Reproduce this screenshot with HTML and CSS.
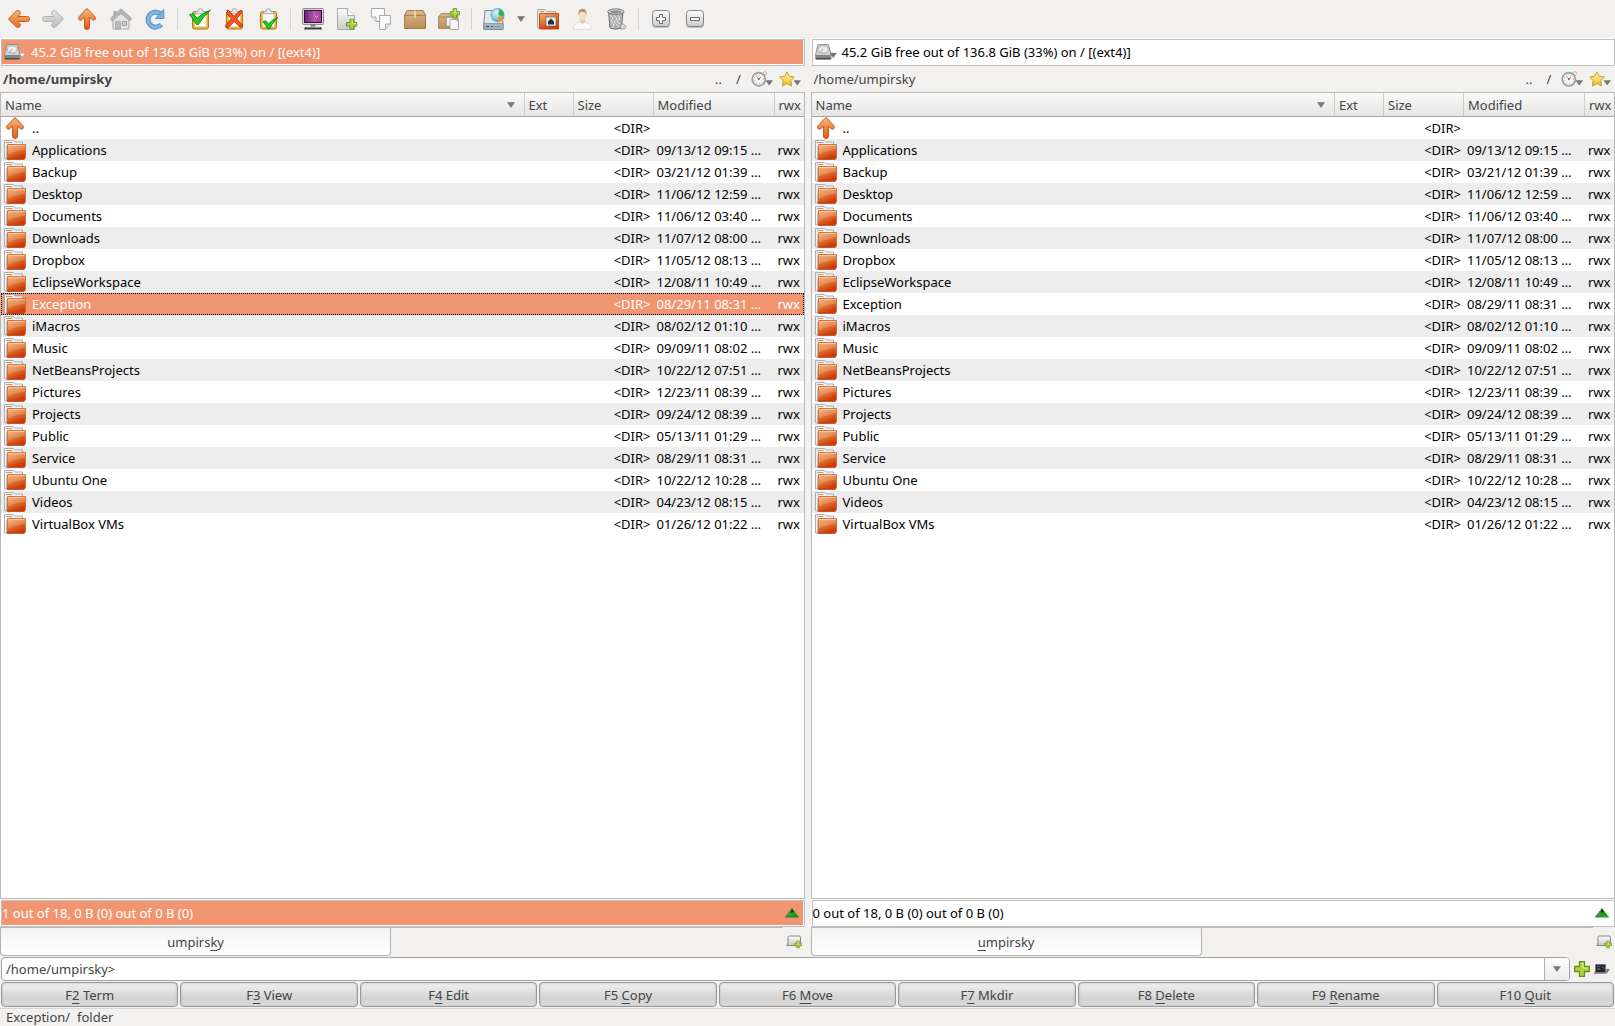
FILE: index.html
```
<!DOCTYPE html>
<html lang="en">
<head>
    <meta charset="UTF-8">
    <meta name="viewport" content="width=device-width, initial-scale=1.0">
    <title>Krusader</title>
    <link rel="stylesheet" href="styles.css">
</head>
<body>

    <!-- Icon definitions -->
    <svg class="icon-defs" aria-hidden="true">
        <defs>
            <linearGradient id="orange" x1="0" y1="0" x2="0" y2="1">
                <stop offset="0" stop-color="#f3ba78"/>
                <stop offset="1" stop-color="#e2560f"/>
            </linearGradient>
            <linearGradient id="orangeLeft" x1="0" y1="0" x2="0" y2="1">
                <stop offset="0" stop-color="#f7b878"/>
                <stop offset="1" stop-color="#e96a20"/>
            </linearGradient>
            <linearGradient id="folderFront" x1="0" y1="0" x2=".5" y2="1">
                <stop offset="0" stop-color="#f2b275"/>
                <stop offset="0.5" stop-color="#e07a38"/>
                <stop offset="1" stop-color="#cf3805"/>
            </linearGradient>
            <linearGradient id="gray" x1="0" y1="0" x2="0" y2="1">
                <stop offset="0" stop-color="#e2e2e2"/>
                <stop offset="1" stop-color="#bdbdbd"/>
            </linearGradient>
            <linearGradient id="box" x1="0" y1="0" x2="0" y2="1">
                <stop offset="0" stop-color="#dcb98a"/>
                <stop offset="1" stop-color="#b98c56"/>
            </linearGradient>
            <linearGradient id="metal" x1="0" y1="0" x2="0" y2="1">
                <stop offset="0" stop-color="#fdfdfd"/>
                <stop offset="1" stop-color="#c9c9c9"/>
            </linearGradient>
            <linearGradient id="screen" x1="0" y1="0" x2="1" y2="0">
                <stop offset="0" stop-color="#6d2470"/>
                <stop offset="0.6" stop-color="#b658b4"/>
                <stop offset="1" stop-color="#94429a"/>
            </linearGradient>
            <linearGradient id="star" x1="0" y1="0" x2="0" y2="1">
                <stop offset="0" stop-color="#fff6c0"/>
                <stop offset="1" stop-color="#f5bd12"/>
            </linearGradient>
            <radialGradient id="globe" cx="0.4" cy="0.35" r="0.7">
                <stop offset="0" stop-color="#e4f5fc"/>
                <stop offset="1" stop-color="#4aa3cf"/>
            </radialGradient>
        </defs>

        <symbol id="i-back" viewBox="0 0 22 22">
            <path d="M8.2 3.2 Q10.6 1.4 12.2 3.8 Q13 5.4 11.6 6.8 L9.9 8.5 H19.5 Q21.5 8.5 21.5 11 T19.5 13.5 H9.9 L11.6 15.2 Q13 16.6 12.2 18.2 Q10.6 20.6 8.2 18.8 L1.3 12 Q.2 11 1.3 10Z" fill="url(#orangeLeft)" stroke="#cf5b1e"/>
        </symbol>
        <symbol id="i-forward" viewBox="0 0 22 22">
            <path d="M13.8 3.2 Q11.4 1.4 9.8 3.8 Q9 5.4 10.4 6.8 L12.1 8.5 H2.5 Q.5 8.5 .5 11 T2.5 13.5 H12.1 L10.4 15.2 Q9 16.6 9.8 18.2 Q11.4 20.6 13.8 18.8 L20.7 12 Q21.8 11 20.7 10Z" fill="url(#gray)" stroke="#b3b3b3"/>
        </symbol>
        <symbol id="i-up" viewBox="0 0 22 22">
            <path d="M3 8.8 L10 1.3 Q11 .2 12 1.3 L19 8.8 Q20.2 10.6 18.8 11.8 Q17.2 12.8 15.8 11.4 L13.5 9 V19.5 Q13.5 21.5 11 21.5 T8.5 19.5 V9 L6.2 11.4 Q4.8 12.8 3.2 11.8 Q1.8 10.6 3 8.8Z" fill="url(#orange)" stroke="#c95a24"/>
        </symbol>
        <symbol id="i-home" viewBox="0 0 22 22">
            <path d="M3 9.5 L11 2.5 L19 9.5 V21 H3Z" fill="#e3e3e3" stroke="#aaa"/>
            <path d="M3.5 3 H6.5 V8 H3.5Z" fill="#aaa"/>
            <path d="M11 .8 L21.6 10.4 L20 13 L11 5.5 L2 13 L.4 10.4Z" fill="#b4b4b4" stroke="#999" stroke-width=".7"/>
            <path d="M5.5 13.5 H10.5 V21 H5.5Z" fill="#b9b9b9" stroke="#a2a2a2" stroke-width=".7"/>
            <path d="M12.5 13.5 H16.5 V17.5 H12.5Z" fill="#ccc" stroke="#a2a2a2"/>
        </symbol>
        <symbol id="i-refresh" viewBox="0 0 22 22">
            <path d="M17.3 16.5 A7.5 7.5 0 1 1 16 5.6" fill="none" stroke="#4f8fc6" stroke-width="5"/>
            <path d="M17.3 16.5 A7.5 7.5 0 1 1 16 5.6" fill="none" stroke="#83b7e2" stroke-width="3"/>
            <path d="M19.8 1.5 V10.5 H11.5 L14 8 L16.6 4.5Z" fill="#80b4e0" stroke="#4f8fc6"/>
        </symbol>

        <symbol id="i-clipboard" viewBox="0 0 22 22">
            <rect x="3.5" y="3.5" width="16" height="17.5" rx="2" fill="#f2b234" stroke="#b9790e"/>
            <path d="M5.8 5.5 H17.2 V18.8 H5.8Z" fill="#fff" stroke="#d3c6a8" stroke-width=".6"/>
            <path d="M6.5 5.8 V3.6 H9 Q9 .6 11.5 .6 T14 3.6 H16.5 V5.8Z" fill="#e8e8e8" stroke="#9c9c9c" stroke-width=".8"/>
        </symbol>
        <symbol id="i-select" viewBox="0 0 22 22">
            <use href="#i-clipboard"/>
            <path d="M.7 6.5 L4.5 5.5 L8 10.5 Q13 5 21.5 2.2 Q14 8.5 9.3 16.5 H7.5Z" fill="#1fd11f" stroke="#0a8412" stroke-width=".9"/>
        </symbol>
        <symbol id="i-unselect" viewBox="0 0 22 22">
            <use href="#i-clipboard"/>
            <path d="M4.6 3.6 Q3 1.8 5 2 L11 8.3 L17.5 2.5 Q20 2 19 4 L13.7 11 L19.5 17.2 Q19.8 19.5 17 19 L11.3 13.5 L5.3 19.5 Q2 20.4 2.6 17.3 L8.3 10.8 L3.4 5.3Z" fill="#f4541e" stroke="#bb2608" stroke-width=".9"/>
        </symbol>
        <symbol id="i-invert" viewBox="0 0 22 22">
            <use href="#i-clipboard"/>
            <path d="M6 13.5 L8.8 12.8 L11.5 16 Q15 11.5 20.8 9.5 Q15.5 14.5 12.5 20.8 H11Z" fill="#1fd11f" stroke="#0a8412" stroke-width=".9"/>
        </symbol>

        <symbol id="i-terminal" viewBox="0 0 22 22">
            <rect x=".5" y=".5" width="21" height="16" rx="1" fill="#d5d5d2" stroke="#8d8d8a"/>
            <rect x="2.5" y="2.5" width="17" height="12" fill="url(#screen)" stroke="#35103a"/>
            <path d="M12.5 7.5 L14.5 9.5 L16.5 7.5" fill="none" stroke="#ecc5ec" stroke-width=".8"/>
            <path d="M8.5 16.5 H13.5 V19 H8.5Z" fill="#777"/>
            <path d="M3 19 H19 L20 21.5 H2Z" fill="#3c3c3c"/>
            <path d="M4 19 H18" stroke="#ddd"/>
        </symbol>
        <symbol id="i-plus" viewBox="0 0 16 16">
            <path d="M5.5 .7 H10.5 V5.5 H15.3 V10.5 H10.5 V15.3 H5.5 V10.5 H.7 V5.5 H5.5Z" fill="#b5cf3f" stroke="#5f9220" stroke-width="1.3"/>
            <path d="M7 2.3 H9 V7 H13.7" fill="none" stroke="#e1ee9c" stroke-width="1"/>
        </symbol>
        <symbol id="i-newfile" viewBox="0 0 22 22">
            <path d="M1.5 .5 H11.5 L18.5 7.5 V21.5 H1.5Z" fill="url(#metal)" stroke="#ababab"/>
            <path d="M11.5 .5 V7.5 H18.5" fill="#fff" stroke="#ababab"/>
            <use href="#i-plus" x="10" y="10.5" width="11.5" height="11.5"/>
        </symbol>
        <symbol id="i-copy" viewBox="0 0 22 22">
            <path d="M1.5 .5 H14.5 V13.5 H6 L1.5 9Z" fill="#fcfcfc" stroke="#a9a9a9"/>
            <path d="M1.5 9 H6 V13.5" fill="#e5e5e5" stroke="#a9a9a9"/>
            <path d="M9.5 7.5 H20.5 V16 L15.5 21.5 H9.5Z" fill="#fcfcfc" stroke="#a9a9a9"/>
            <path d="M15.5 21.5 V16 H20.5" fill="#e5e5e5" stroke="#a9a9a9"/>
        </symbol>
        <symbol id="i-pack" viewBox="0 0 22 22">
            <path d="M3 2.5 H19 L21.5 7 V20.5 H.5 V7Z" fill="url(#box)" stroke="#a07c4c"/>
            <path d="M.5 7.5 H21.5" stroke="#a98251"/>
            <path d="M10 2.5 H12 V10 H10Z" fill="#e8cfa6"/>
        </symbol>
        <symbol id="i-paste" viewBox="0 0 22 22">
            <path d="M3 5.5 H18.5 L20 9 V20.5 H.5 V9Z" fill="url(#box)" stroke="#b08b5b"/>
            <path d="M.5 9 H19" stroke="#a98251"/>
            <path d="M8.5 9.5 H15 V18 H8.5Z" fill="#f3f3f3" stroke="#999" stroke-width=".8"/>
            <path d="M12 11.5 H18 L20.5 14 V21.5 H12Z" fill="#f7f7f7" stroke="#999" stroke-width=".8"/>
            <use href="#i-plus" x="11.5" y="0" width="10.5" height="10.5"/>
        </symbol>

        <symbol id="i-network" viewBox="0 0 22 22">
            <path d="M2 2.5 H18 L20 15 V21.5 H.8 V15Z" fill="#e2e7ec" stroke="#7b8894"/>
            <path d="M1 15.5 H20 V21.3 H1Z" fill="#a5b4c2" stroke="#7b8894" stroke-width=".7"/>
            <path d="M3 18.5 H6 M8 18.5 H9.5" stroke="#35404a"/>
            <path d="M10 18.5 H18" stroke="#6fae7a"/>
            <circle cx="14.5" cy="7" r="6.7" fill="url(#globe)" stroke="#4e9fc4" stroke-width=".6"/>
            <path d="M16 1 Q20 2 21 6.5 Q18.5 9.5 16 7 Q14 5 16.5 4Z" fill="#32b340"/>
            <path d="M15 8.5 L21.8 10.5 L15.5 15Z" fill="#f7941d"/>
        </symbol>
        <symbol id="i-homefolder" viewBox="0 0 22 22">
            <path d="M.5 1.5 H8 L10 3.5 H18.5 V20 H.5Z" fill="#ececec" stroke="#a7a7a7"/>
            <path d="M2.5 3.5 H7" stroke="#ee8a50"/>
            <path d="M2.5 5.5 H21.5 V21 H2.5Z" fill="url(#folderFront)" stroke="#c44b18"/>
            <rect x="9" y="9" width="10" height="9" fill="#eee" stroke="#777" stroke-width=".8"/>
            <path d="M11 13.5 L14 10.5 L17 13.5 V16.5 H11Z" fill="#29303a"/>
        </symbol>
        <symbol id="i-user" viewBox="0 0 22 22">
            <path d="M2.5 21.3 Q2 15 8.5 14 H13.5 Q20.5 15 20 21.3Z" fill="#fafafa" stroke="#dcdcdc"/>
            <path d="M9 10 H14 V14 Q11.5 17 9 14Z" fill="#e9c9a2"/>
            <ellipse cx="11.5" cy="6.8" rx="3.7" ry="5.2" fill="#f6dfc1"/>
            <path d="M7.5 7.5 Q6.8 .7 11.5 .7 T15.5 7.5 L14.3 4.3 Q11.5 3.2 8.8 4.3Z" fill="#b3905a"/>
        </symbol>
        <symbol id="i-trash" viewBox="0 0 22 22">
            <path d="M3.5 4 H18 L16.5 20 Q10.5 22.5 5 20Z" fill="#b0b0b0" stroke="#777"/>
            <path d="M5.5 7 L8 10 L6 13 L9 17 L7 20 M9 7 L12 11 L9 14 L14 19 M13 7 L15 10 L12 14 L15 16" fill="none" stroke="#e9e9e9"/>
            <ellipse cx="10.8" cy="3.7" rx="8.2" ry="2.8" fill="#d5d5d5" stroke="#777"/>
            <ellipse cx="10.8" cy="3.9" rx="5.8" ry="1.5" fill="#8e8e8e"/>
            <path d="M15.5 17 L18 15.8 L21 18.5 L19.5 21 H15.5Z" fill="#d8d8d8" stroke="#8a8a8a" stroke-width=".8"/>
        </symbol>
        <symbol id="i-expand" viewBox="0 0 22 22">
            <rect x="2.5" y="2.5" width="17" height="17.5" rx="3" fill="#c4c4c4"/>
            <rect x="2.5" y="2.5" width="17" height="16" rx="3" fill="url(#metal)" stroke="#858585"/>
            <path d="M9.5 6.5 H12.5 V9.5 H15.5 V12.5 H12.5 V15.5 H9.5 V12.5 H6.5 V9.5 H9.5Z" fill="#fff" stroke="#6d6d6d"/>
        </symbol>
        <symbol id="i-collapse" viewBox="0 0 22 22">
            <rect x="2.5" y="2.5" width="17" height="17.5" rx="3" fill="#c4c4c4"/>
            <rect x="2.5" y="2.5" width="17" height="16" rx="3" fill="url(#metal)" stroke="#858585"/>
            <path d="M6.5 9.5 H15.5 V12.5 H6.5Z" fill="#fff" stroke="#6d6d6d"/>
        </symbol>

        <symbol id="i-arrow" viewBox="0 0 8 6">
            <path d="M.5 .5 H7.5 L4 5.5Z" fill="currentColor" stroke="#777" stroke-width=".6"/>
        </symbol>
        <symbol id="i-disk" viewBox="0 0 22 16">
            <path d="M3 .6 H13.5 L16 10.5 V15 H.6 V10.5Z" fill="#d2d2d2" stroke="#888" stroke-width=".9"/>
            <ellipse cx="8.2" cy="5.4" rx="5" ry="3.7" fill="#ececec" stroke="#a5a5a5" stroke-width=".8"/>
            <path d="M8 5 L5 9" stroke="#999"/>
            <path d="M.8 11 H15.8 V15.2 H.8Z" fill="#858585"/>
            <path d="M1 14.8 H15.6" stroke="#333"/>
            <use href="#i-arrow" x="14.5" y="8.5" width="7.5" height="5.6"/>
        </symbol>
        <symbol id="i-clock" viewBox="0 0 22 16">
            <circle cx="14" cy="2.4" r="1.8" fill="#e6e6e6" stroke="#b5b5b5" stroke-width=".7"/>
            <circle cx="7.8" cy="8.2" r="6.6" fill="#f7f7f7" stroke="#a0a0a0" stroke-width="1.8"/>
            <circle cx="7.8" cy="8.2" r="4.6" fill="none" stroke="#888" stroke-width=".8" stroke-dasharray="1 2"/>
            <path d="M5.5 5.5 L8 8.2 L10 6" fill="none" stroke="#777" stroke-width=".8"/>
            <circle cx="7.8" cy="8" r="1" fill="#d3431d"/>
            <use href="#i-arrow" x="14.5" y="9" width="7.5" height="5.6"/>
        </symbol>
        <symbol id="i-star" viewBox="0 0 22 16">
            <path d="M8 .8 L10.2 5.3 L15.4 6 L11.7 9.6 L12.6 15 L8 12.4 L3.4 15 L4.3 9.6 L.6 6 L5.8 5.3Z" fill="url(#star)" stroke="#d09a2a" stroke-linejoin="round"/>
            <use href="#i-arrow" x="14.5" y="9" width="7.5" height="5.6"/>
        </symbol>
        <symbol id="i-folder" viewBox="0 0 22 20">
            <path d="M.5 19 V.5 H9.5 L11 2 H18.5 V6 H3 V19Z" fill="#f4f4f4" stroke="#a9aeb4"/>
            <path d="M2 2.5 H8.5 M5 4.5 H10" stroke="#eb8a58"/>
            <path d="M3.5 4.5 H21.5 V17.5 Q21.5 19 19.5 19 H3 Z" fill="url(#folderFront)" stroke="#d2622c" stroke-width=".8"/>
            <path d="M4 5 H21 V10 Q12 10.5 4 14.5Z" fill="#fff" opacity=".16"/>
            <path d="M4 5.5 H21" stroke="#f7cfa8" stroke-width=".8"/>
            <path d="M3 19.2 H20.5" stroke="#b22b07"/>
        </symbol>
        <symbol id="i-pyramid" viewBox="0 0 14 10">
            <path d="M7 .3 L13.8 8.7 H.2Z" fill="#12a512"/>
            <path d="M7 .3 L5.5 8.7 H.2Z" fill="#4d8f4f"/>
            <path d="M7 .3 L9 4 L5.5 5Z" fill="#0b3d0b"/>
            <path d="M.2 9 H13.8" stroke="#0a6d0a" stroke-width=".8"/>
        </symbol>
        <symbol id="i-newtab" viewBox="0 0 16 14">
            <path d="M.5 10.5 Q2 10 2 7.5 V2.5 Q2 1 3.5 1 H13 Q14.5 1 14.5 2.5 V10.5Z" fill="url(#metal)" stroke="#858585"/>
            <use href="#i-plus" x="8" y="5.5" width="8" height="8"/>
        </symbol>
        <symbol id="i-console" viewBox="0 0 16 12">
            <path d="M1.5 1.5 H11.5 V8 L12 10.5 H.5 L1.5 8Z" fill="#24262b" stroke="#77787c"/>
            <path d="M3 3.5 H5.5 M3 6 H6.5 M8 4 L10 5.5" stroke="#777a83"/>
            <path d="M.5 10 H12" stroke="#9d9ea2" stroke-width="1.4"/>
            <use href="#i-arrow" x="10" y="5.5" width="6" height="5"/>
        </symbol>
    </svg>

    <!-- Main toolbar -->
    <nav class="toolbar" aria-label="Main toolbar">
        <button class="tool" aria-label="Back"><svg><use href="#i-back"/></svg></button>
        <button class="tool" aria-label="Forward"><svg><use href="#i-forward"/></svg></button>
        <button class="tool" aria-label="Up"><svg><use href="#i-up"/></svg></button>
        <button class="tool" aria-label="Home"><svg><use href="#i-home"/></svg></button>
        <button class="tool" aria-label="Reload"><svg><use href="#i-refresh"/></svg></button>
        <span class="separator"></span>
        <button class="tool" aria-label="Select group"><svg><use href="#i-select"/></svg></button>
        <button class="tool" aria-label="Unselect group"><svg><use href="#i-unselect"/></svg></button>
        <button class="tool" aria-label="Invert selection"><svg><use href="#i-invert"/></svg></button>
        <span class="separator"></span>
        <button class="tool" aria-label="Terminal"><svg><use href="#i-terminal"/></svg></button>
        <button class="tool" aria-label="New file"><svg><use href="#i-newfile"/></svg></button>
        <button class="tool" aria-label="Compare"><svg><use href="#i-copy"/></svg></button>
        <button class="tool" aria-label="Pack"><svg><use href="#i-pack"/></svg></button>
        <button class="tool" aria-label="Unpack"><svg><use href="#i-paste"/></svg></button>
        <span class="separator"></span>
        <button class="tool" aria-label="Network connection"><svg><use href="#i-network"/></svg></button>
        <button class="tool tool-menu" aria-label="Connection menu"><svg><use href="#i-arrow"/></svg></button>
        <button class="tool" aria-label="Home folder"><svg><use href="#i-homefolder"/></svg></button>
        <button class="tool" aria-label="Root mode"><svg><use href="#i-user"/></svg></button>
        <button class="tool" aria-label="Trash"><svg><use href="#i-trash"/></svg></button>
        <span class="separator"></span>
        <button class="tool" aria-label="Mark"><svg><use href="#i-expand"/></svg></button>
        <button class="tool" aria-label="Unmark"><svg><use href="#i-collapse"/></svg></button>
    </nav>

    <!-- File panels -->
    <main class="panels">
        <section class="panel active">
            <div class="info-bar">
                <button class="icon-button" aria-label="Media"><svg class="small-icon"><use href="#i-disk"/></svg></button>
                <span>45.2 GiB free out of 136.8 GiB (33%) on / [(ext4)]</span>
            </div>
            <div class="path-bar">
                <span class="path">/home/umpirsky</span>
                <button class="path-button">..</button>
                <button class="path-button">/</button>
                <button class="icon-button" aria-label="History"><svg class="small-icon"><use href="#i-clock"/></svg></button>
                <button class="icon-button" aria-label="Bookmarks"><svg class="small-icon"><use href="#i-star"/></svg></button>
            </div>
            <div class="file-list">
                <table>
                    <thead>
                        <tr>
                            <th class="col-name"><span class="sorted">Name <svg><use href="#i-arrow"/></svg></span></th>
                            <th class="col-ext">Ext</th>
                            <th class="col-size">Size</th>
                            <th class="col-date">Modified</th>
                            <th class="col-perm">rwx</th>
                        </tr>
                    </thead>
                    <tbody data-selected="Exception"></tbody>
                </table>
            </div>
            <div class="info-bar totals">
                <span>1 out of 18, 0 B (0) out of 0 B (0)</span>
                <button class="icon-button" aria-label="Open popup panel"><svg class="pyramid"><use href="#i-pyramid"/></svg></button>
            </div>
            <div class="tab-bar">
                <div class="tabs"><button class="tab">umpirs<u>k</u>y</button></div>
                <button class="icon-button" aria-label="New tab"><svg class="newtab"><use href="#i-newtab"/></svg></button>
            </div>
        </section>

        <section class="panel">
            <div class="info-bar">
                <button class="icon-button" aria-label="Media"><svg class="small-icon"><use href="#i-disk"/></svg></button>
                <span>45.2 GiB free out of 136.8 GiB (33%) on / [(ext4)]</span>
            </div>
            <div class="path-bar">
                <span class="path">/home/umpirsky</span>
                <button class="path-button">..</button>
                <button class="path-button">/</button>
                <button class="icon-button" aria-label="History"><svg class="small-icon"><use href="#i-clock"/></svg></button>
                <button class="icon-button" aria-label="Bookmarks"><svg class="small-icon"><use href="#i-star"/></svg></button>
            </div>
            <div class="file-list">
                <table>
                    <thead>
                        <tr>
                            <th class="col-name"><span class="sorted">Name <svg><use href="#i-arrow"/></svg></span></th>
                            <th class="col-ext">Ext</th>
                            <th class="col-size">Size</th>
                            <th class="col-date">Modified</th>
                            <th class="col-perm">rwx</th>
                        </tr>
                    </thead>
                    <tbody></tbody>
                </table>
            </div>
            <div class="info-bar totals">
                <span>0 out of 18, 0 B (0) out of 0 B (0)</span>
                <button class="icon-button" aria-label="Open popup panel"><svg class="pyramid"><use href="#i-pyramid"/></svg></button>
            </div>
            <div class="tab-bar">
                <div class="tabs"><button class="tab"><u>u</u>mpirsky</button></div>
                <button class="icon-button" aria-label="New tab"><svg class="newtab"><use href="#i-newtab"/></svg></button>
            </div>
        </section>
    </main>

    <!-- Command line -->
    <form class="command-line" onsubmit="return false">
        <div class="command-box">
            <label for="command">/home/umpirsky&gt;</label>
            <input type="text" id="command">
            <button type="button" class="command-history" aria-label="Command history"><svg><use href="#i-arrow"/></svg></button>
        </div>
        <button type="button" class="icon-button" aria-label="Add placeholder"><svg class="add"><use href="#i-plus"/></svg></button>
        <button type="button" class="icon-button" aria-label="Execution mode"><svg class="console"><use href="#i-console"/></svg></button>
    </form>

    <!-- Function keys -->
    <div class="function-keys">
        <button>F<u>2</u> Term</button>
        <button>F<u>3</u> View</button>
        <button>F<u>4</u> Edit</button>
        <button>F5 <u>C</u>opy</button>
        <button>F6 <u>M</u>ove</button>
        <button>F<u>7</u> Mkdir</button>
        <button>F8 <u>D</u>elete</button>
        <button>F9 <u>R</u>ename</button>
        <button>F10 <u>Q</u>uit</button>
    </div>

    <footer class="status-bar">Exception/&nbsp; folder</footer>

    <script src="script.js"></script>
</body>
</html>
```
FILE: styles.css
```
* {
    box-sizing: border-box;
}
body {
    margin: 0;
    height: 100vh;
    display: flex;
    flex-direction: column;
    overflow: hidden;
    background-color: #f2f1f0;
    color: #444;
    font-family: "Noto Sans", "Open Sans", sans-serif;
    font-size: 13px;
    line-height: 18px;
}
button,
input {
    font: inherit;
    color: inherit;
    border: none;
    background: none;
    padding: 0;
    margin: 0;
}
svg {
    display: block;
    flex: none;
}
u {
    text-underline-offset: 3px;
    text-decoration-skip-ink: none;
}
.icon-defs {
    position: absolute;
    width: 0;
    height: 0;
}

/* Toolbar */
.toolbar {
    display: flex;
    align-items: center;
    height: 38px;
    padding: 0 2px;
}
.tool {
    display: flex;
    justify-content: center;
    align-items: center;
    width: 34px;
    height: 34px;
}
.tool svg {
    width: 22px;
    height: 22px;
}
.tool-menu {
    width: 20px;
    color: #777;
}
.tool-menu svg {
    width: 8px;
    height: 6px;
}
.separator {
    width: 1px;
    height: 22px;
    margin: 0 5px;
    background-color: #d6d4d2;
}

/* Panels */
.panels {
    flex: 1;
    display: flex;
    gap: 6px;
    min-height: 0;
}
.panel {
    flex: 1;
    display: flex;
    flex-direction: column;
    min-width: 0;
}
.info-bar {
    display: flex;
    align-items: center;
    gap: 5px;
    height: 28px;
    padding: 0 0 0 3px;
    border: 1px solid;
    border-color: #fff #c0bfbd #c0bfbd #fff;
    box-shadow: inset 1px 1px #c0bfbd, inset -1px -1px #fff;
    background-color: #fff;
    color: #000;
}
.active .info-bar {
    background-color: #f19570;
    color: #fff;
}
.totals {
    justify-content: space-between;
    padding: 0 5px 0 1px;
}
.icon-button {
    display: flex;
    align-items: center;
    color: #777;
}
.active .info-bar .icon-button {
    color: #fff;
}
.small-icon {
    width: 22px;
    height: 16px;
}
.pyramid {
    width: 14px;
    height: 10px;
}

.path-bar {
    display: flex;
    align-items: center;
    height: 26px;
    padding: 0 4px 0 3px;
}
.path {
    flex: 1;
}
.active .path {
    font-weight: bold;
}
.path-button {
    width: 20px;
}
.path-bar .icon-button {
    margin-left: 6px;
}
.path-button + .icon-button {
    margin-left: 2px;
}

/* File list */
.file-list {
    flex: 1;
    min-height: 0;
    overflow: hidden;
    border: 1px solid #bab9b6;
    background-color: #fff;
}
table {
    width: 100%;
    table-layout: fixed;
    border-collapse: separate;
    border-spacing: 0;
}
th {
    height: 24px;
    padding: 0 0 0 4px;
    border-right: 1px solid #cfcdcb;
    border-bottom: 1px solid #a9a7a4;
    background-image: linear-gradient(#fafafa, #e6e5e4);
    font-weight: normal;
    text-align: left;
}
th:last-child {
    border-right: none;
}
.col-ext {
    width: 49px;
}
.col-size {
    width: 80px;
}
.col-date {
    width: 121px;
}
.col-perm {
    width: 29px;
}
.sorted {
    display: flex;
    justify-content: space-between;
    align-items: center;
    padding-right: 9px;
}
.sorted svg {
    width: 8px;
    height: 6px;
    color: #777;
}
td {
    height: 22px;
    padding: 0 3px;
    color: #000;
    line-height: 22px;
    white-space: nowrap;
    overflow: hidden;
}
td.size {
    text-align: right;
}
td.perm {
    padding-right: 0;
}
.file {
    display: flex;
    align-items: center;
    gap: 6px;
    height: 22px;
}
.file svg {
    width: 22px;
    height: 20px;
}
.file .parent {
    height: 22px;
}
tbody tr:nth-child(even) {
    background-color: #ededed;
}
tbody tr.selected {
    background-color: #f19570;
    outline: 1px dotted #000;
    outline-offset: -1px;
}
tr.selected td {
    color: #fff;
}

/* Tabs */
.tab-bar {
    display: flex;
    align-items: center;
    height: 29px;
    padding-right: 3px;
}
.tabs {
    flex: 1;
    height: 29px;
    margin-right: 3px;
    border-top: 1px solid #bab9b6;
}
.tab {
    width: 50%;
    height: 28px;
    border: 1px solid #b3b1ae;
    border-top: none;
    border-radius: 0 0 4px 4px;
    background-image: linear-gradient(#f3f3f3, #fff);
}
.newtab {
    width: 16px;
    height: 14px;
}

/* Command line */
.command-line {
    display: flex;
    align-items: center;
    gap: 4px;
    padding: 1px 5px 1px 1px;
}
.command-box {
    flex: 1;
    display: flex;
    align-items: center;
    height: 24px;
    border: 1px solid #a5a39e;
    border-radius: 4px;
    background-color: #fff;
    overflow: hidden;
}
.command-box label {
    padding-left: 4px;
}
.command-box input {
    flex: 1;
    outline: none;
}
.command-history {
    display: flex;
    justify-content: center;
    align-items: center;
    width: 25px;
    height: 22px;
    border-left: 1px solid #b3b1ae;
    background-image: linear-gradient(#fdfdfd, #ebebea);
}
.command-history svg {
    width: 8px;
    height: 6px;
    color: #777;
}
.add {
    width: 16px;
    height: 16px;
}
.console {
    width: 16px;
    height: 12px;
}

/* Function keys */
.function-keys {
    display: flex;
    gap: 2px;
    padding: 0 1px;
}
.function-keys button {
    flex: 1;
    height: 25px;
    border: 1px solid #999;
    border-radius: 4px;
    background-image: linear-gradient(#f1f1f1, #d2d2d2 70%, #dedede);
    box-shadow: inset 0 0 3px #bbb;
}

.status-bar {
    height: 18px;
    margin-top: 1px;
    padding-left: 6px;
    border-top: 1px solid #d9d7d5;
    line-height: 16px;
}
```
FILE: script.js
```
// Directory entries shown in both panels
const entries = [
    ['Applications', '09/13/12 09:15 …'],
    ['Backup', '03/21/12 01:39 …'],
    ['Desktop', '11/06/12 12:59 …'],
    ['Documents', '11/06/12 03:40 …'],
    ['Downloads', '11/07/12 08:00 …'],
    ['Dropbox', '11/05/12 08:13 …'],
    ['EclipseWorkspace', '12/08/11 10:49 …'],
    ['Exception', '08/29/11 08:31 …'],
    ['iMacros', '08/02/12 01:10 …'],
    ['Music', '09/09/11 08:02 …'],
    ['NetBeansProjects', '10/22/12 07:51 …'],
    ['Pictures', '12/23/11 08:39 …'],
    ['Projects', '09/24/12 08:39 …'],
    ['Public', '05/13/11 01:29 …'],
    ['Service', '08/29/11 08:31 …'],
    ['Ubuntu One', '10/22/12 10:28 …'],
    ['Videos', '04/23/12 08:15 …'],
    ['VirtualBox VMs', '01/26/12 01:22 …']
];

function row(name, date, perm, icon, selected) {
    return `<tr class="${selected ? 'selected' : ''}">
        <td><div class="file"><svg class="${icon === 'up' ? 'parent' : ''}"><use href="#i-${icon}"/></svg>${name}</div></td>
        <td></td>
        <td class="size">&lt;DIR&gt;</td>
        <td>${date}</td>
        <td class="perm">${perm}</td>
    </tr>`;
}

document.querySelectorAll('tbody').forEach(function(body) {
    body.innerHTML = row('..', '', '', 'up', false) + entries.map(function(entry) {
        return row(entry[0], entry[1], 'rwx', 'folder', entry[0] === body.dataset.selected);
    }).join('');
});
```
